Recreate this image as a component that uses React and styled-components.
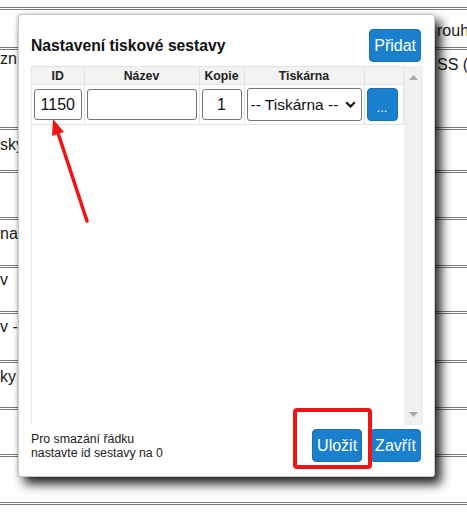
import React from "react";
import styled, { createGlobalStyle } from "styled-components";

const Global = createGlobalStyle`
  html, body { margin: 0; padding: 0; background: #fff; overflow: hidden; }
  body { font-family: "Liberation Sans", Arial, sans-serif; color: #1a1a1a; }
  * { box-sizing: border-box; }
`;

const Viewport = styled.div`
  position: relative;
  width: 467px;
  height: 518px;
  overflow: hidden;
`;

const Page = styled.div`
  display: flex;
  flex-direction: column;
`;

const Row = styled.div`
  display: grid;
  grid-template-columns: 437px 1fr;
  height: ${(p) => p.$h + 3}px;
  flex-shrink: 0;
  border-bottom: 3px double #7a7a7a;
  font-size: 16px;
  line-height: 18px;
  white-space: nowrap;
  overflow: hidden;
`;

const Cell = styled.div`
  padding-top: ${(p) => p.$top || 0}px;
  overflow: hidden;
`;

const Dialog = styled.div`
  position: absolute;
  left: 18px;
  top: 14px;
  width: 417px;
  height: 463px;
  background: #fff;
  border: 1px solid #c8c8c8;
  border-radius: 3px;
  box-shadow: 6px 7px 11px rgba(0, 0, 0, 0.88), -1px 0 3px rgba(0, 0, 0, 0.15);
  padding: 14px 11px 14px 12px;
  display: flex;
  flex-direction: column;
  gap: 4px;
`;

const Header = styled.div`
  display: flex;
  align-items: center;
  justify-content: space-between;
  height: 33px;
  padding-right: 2px;
`;

const Title = styled.h2`
  margin: 0;
  font-size: 15.7px;
  font-weight: bold;
  color: #111;
`;

const Button = styled.button`
  height: 33px;
  padding: 0 4px;
  min-width: ${(p) => p.$w || 48}px;
  background: #1a7fcc;
  color: #fff;
  border: 1px solid #1671b8;
  border-radius: 4px;
  font-family: "Liberation Sans", Arial, sans-serif;
  font-size: 16px;
  cursor: pointer;
`;

const DotsButton = styled(Button)`
  width: 31px;
  min-width: 31px;
  height: 33px;
  font-size: 13px;
  padding: 6px 0 0;
`;

const Grid = styled.div`
  flex: 1;
  display: flex;
  min-height: 0;
`;

const TableArea = styled.div`
  flex: 1;
  border-left: 1px solid #e6e6e6;
`;

const Table = styled.table`
  width: 371px;
  border-collapse: collapse;
  table-layout: fixed;
`;

const Th = styled.th`
  height: 18px;
  padding: 0;
  background: #f3f3f3;
  border: 1px solid #e3e3e3;
  border-left: none;
  font-size: 12.3px;
  font-weight: bold;
  color: #222;
  text-align: center;
`;

const Td = styled.td`
  height: 40px;
  padding: 0 2px;
  border: 1px solid #e3e3e3;
  border-left: none;
  border-top: none;
  vertical-align: middle;
`;

const Input = styled.input`
  width: 100%;
  height: 31px;
  border: 1px solid #767676;
  border-radius: 3px;
  font-family: "Liberation Sans", Arial, sans-serif;
  font-size: 16px;
  text-align: ${(p) => (p.$center ? "center" : "left")};
  color: #111;
  padding: 0 2px;
  display: block;
`;

const SelectWrap = styled.div`
  position: relative;
  height: 33px;
`;

const Select = styled.select`
  appearance: none;
  width: 100%;
  height: 33px;
  border: 1px solid #767676;
  border-radius: 3px;
  background: #fff;
  font-family: "Liberation Sans", Arial, sans-serif;
  font-size: 15.5px;
  color: #111;
  padding: 0 0 0 3px;
`;

const Chevron = styled.svg`
  position: absolute;
  right: 6px;
  top: 13px;
  pointer-events: none;
`;

const Scrollbar = styled.div`
  width: 21px;
  background: #f0f0f0;
  display: flex;
  flex-direction: column;
  justify-content: space-between;
  align-items: center;
  padding: 9px 0 8px;
`;

const Footer = styled.div`
  display: flex;
  align-items: center;
  justify-content: space-between;
  height: 33px;
  padding-right: 2px;
`;

const Note = styled.p`
  margin: 0;
  font-size: 12.3px;
  line-height: 14px;
  color: #222;
`;

const Actions = styled.div`
  display: flex;
  gap: 8px;
`;

const Overlay = styled.svg`
  position: absolute;
  left: 0;
  top: 0;
  pointer-events: none;
`;

const rows = [
  { h: 7 },
  { h: 37, right: "rouh", rt: 12 },
  { h: 77, left: "zn", lt: 0, right: "SS (", rt: 6 },
  { h: 40, left: "sky", lt: 6 },
  { h: 44 },
  { h: 45, left: "na", lt: 5 },
  { h: 43, left: "v", lt: 3 },
  { h: 46, left: "v -", lt: 4 },
  { h: 44, left: "ky", lt: 5 },
  { h: 44 },
  { h: 45 },
  { h: 20 },
];

export default function App() {
  return (
    <Viewport>
      <Global />
      <Page>
        {rows.map((r, i) => (
          <Row key={i} $h={r.h}>
            <Cell $top={r.lt}>{r.left}</Cell>
            <Cell $top={r.rt}>{r.right}</Cell>
          </Row>
        ))}
      </Page>

      <Dialog>
        <Header>
          <Title>Nastavení tiskové sestavy</Title>
          <Button $w={49}>Přidat</Button>
        </Header>
        <Grid>
          <TableArea>
            <Table>
              <colgroup>
                <col style={{ width: 52 }} />
                <col style={{ width: 115 }} />
                <col style={{ width: 45 }} />
                <col style={{ width: 120 }} />
                <col style={{ width: 39 }} />
              </colgroup>
              <thead>
                <tr>
                  <Th>ID</Th>
                  <Th>Název</Th>
                  <Th>Kopie</Th>
                  <Th>Tiskárna</Th>
                  <Th></Th>
                </tr>
              </thead>
              <tbody>
                <tr>
                  <Td>
                    <Input $center defaultValue="1150" />
                  </Td>
                  <Td>
                    <Input defaultValue="" />
                  </Td>
                  <Td>
                    <Input $center defaultValue="1" />
                  </Td>
                  <Td>
                    <SelectWrap>
                      <Select defaultValue="">
                        <option value="">-- Tiskárna --</option>
                      </Select>
                      <Chevron width="11" height="7" viewBox="0 0 11 7">
                        <path d="M1.2 1.2 L5.5 5.5 L9.8 1.2" fill="none" stroke="#111" strokeWidth="2.2" />
                      </Chevron>
                    </SelectWrap>
                  </Td>
                  <Td>
                    <DotsButton>...</DotsButton>
                  </Td>
                </tr>
              </tbody>
            </Table>
          </TableArea>
          <Scrollbar>
            <svg width="9" height="5" viewBox="0 0 9 5">
              <path d="M0 5 L4.5 0 L9 5 Z" fill="#a8a8a8" />
            </svg>
            <svg width="9" height="5" viewBox="0 0 9 5">
              <path d="M0 0 L4.5 5 L9 0 Z" fill="#a8a8a8" />
            </svg>
          </Scrollbar>
        </Grid>
        <Footer>
          <Note>
            Pro smazání řádku
            <br />
            nastavte id sestavy na 0
          </Note>
          <Actions>
            <Button>Uložit</Button>
            <Button>Zavřít</Button>
          </Actions>
        </Footer>
      </Dialog>

      <Overlay width="467" height="518" viewBox="0 0 467 518">
        <line x1="87" y1="221" x2="58" y2="133" stroke="#f21414" strokeWidth="3.5" strokeLinecap="round" />
        <polygon points="53,119 64,132 52,136" fill="#f21414" />
        <rect x="295" y="410" width="75" height="57" rx="2" fill="none" stroke="#f21414" strokeWidth="4" />
      </Overlay>
    </Viewport>
  );
}
